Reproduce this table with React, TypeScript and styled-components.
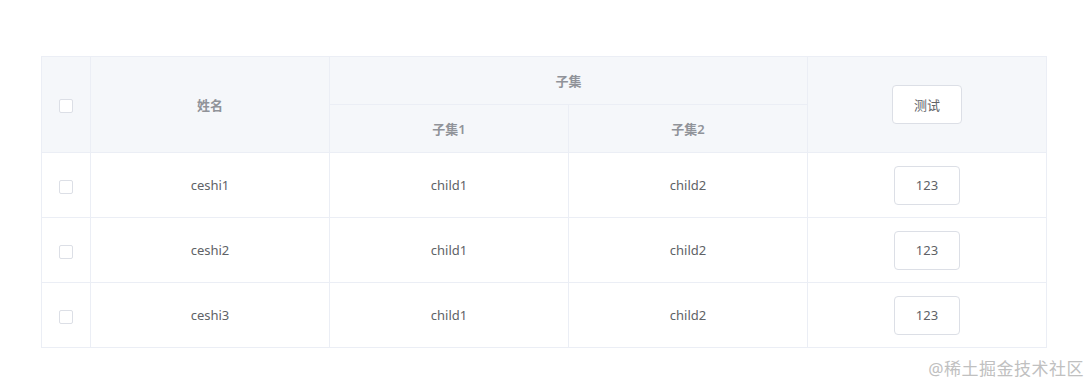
import React from 'react';
import styled, { createGlobalStyle } from 'styled-components';

const GlobalStyle = createGlobalStyle`
    body {
        margin: 0;
        background: #ffffff;
        font-family: "Helvetica Neue", "Noto Sans", "Noto Sans CJK SC", sans-serif;
    }
`;

type Row = { name: string; child1: string; child2: string };

const rows: Row[] = [
    { name: 'ceshi1', child1: 'child1', child2: 'child2' },
    { name: 'ceshi2', child1: 'child1', child2: 'child2' },
    { name: 'ceshi3', child1: 'child1', child2: 'child2' },
];

export const App = () => {
    return (
        <>
            <GlobalStyle />
            <Page>
                <Table>
                    <colgroup>
                        <col style={{ width: 49 }} />
                        <col style={{ width: 239 }} />
                        <col style={{ width: 239 }} />
                        <col style={{ width: 239 }} />
                        <col style={{ width: 239 }} />
                    </colgroup>
                    <thead>
                        <tr>
                            <HeadCell rowSpan={2}>
                                <Checkbox />
                            </HeadCell>
                            <HeadCell rowSpan={2}>姓名</HeadCell>
                            <HeadCell colSpan={2}>子集</HeadCell>
                            <HeadCell rowSpan={2}>
                                <Button $w={70}>测试</Button>
                            </HeadCell>
                        </tr>
                        <tr>
                            <HeadCell>子集1</HeadCell>
                            <HeadCell>子集2</HeadCell>
                        </tr>
                    </thead>
                    <tbody>
                        {rows.map((r) => (
                            <BodyRow key={r.name}>
                                <Cell>
                                    <Checkbox />
                                </Cell>
                                <Cell>{r.name}</Cell>
                                <Cell>{r.child1}</Cell>
                                <Cell>{r.child2}</Cell>
                                <Cell>
                                    <Button $w={66}>123</Button>
                                </Cell>
                            </BodyRow>
                        ))}
                    </tbody>
                </Table>
            </Page>
            <Watermark>@稀土掘金技术社区</Watermark>
        </>
    );
};

const Page = styled.div`
    padding: 56px 0 0 41px;
`;

const Table = styled.table`
    width: 1006px;
    table-layout: fixed;
    border-collapse: collapse;
    font-size: 13px;
    color: #606266;
`;

const HeadCell = styled.th`
    height: 47px;
    padding: 0;
    background: #f5f7fa;
    border: 1px solid #ebeef5;
    color: #909399;
    font-weight: 600;
    font-size: 13px;
    text-align: center;
    vertical-align: middle;
`;

const BodyRow = styled.tr`
    height: 65px;
`;

const Cell = styled.td`
    padding: 0;
    border: 1px solid #ebeef5;
    text-align: center;
    vertical-align: middle;
`;

const Checkbox = styled.span`
    display: inline-block;
    width: 12px;
    height: 12px;
    border: 1px solid #dcdfe6;
    border-radius: 2px;
    background: #ffffff;
    vertical-align: middle;
`;

const Button = styled.button<{ $w: number }>`
    width: ${(p) => p.$w}px;
    height: 39px;
    padding: 0;
    border: 1px solid #dcdfe6;
    border-radius: 4px;
    background: #ffffff;
    color: #606266;
    font-family: inherit;
    font-size: 13px;
    font-weight: 400;
    vertical-align: middle;
`;

const Watermark = styled.div`
    position: absolute;
    right: 8px;
    top: 355px;
    font-size: 17px;
    color: #c0c0c0;
    letter-spacing: 0.5px;
`;

export default App;
